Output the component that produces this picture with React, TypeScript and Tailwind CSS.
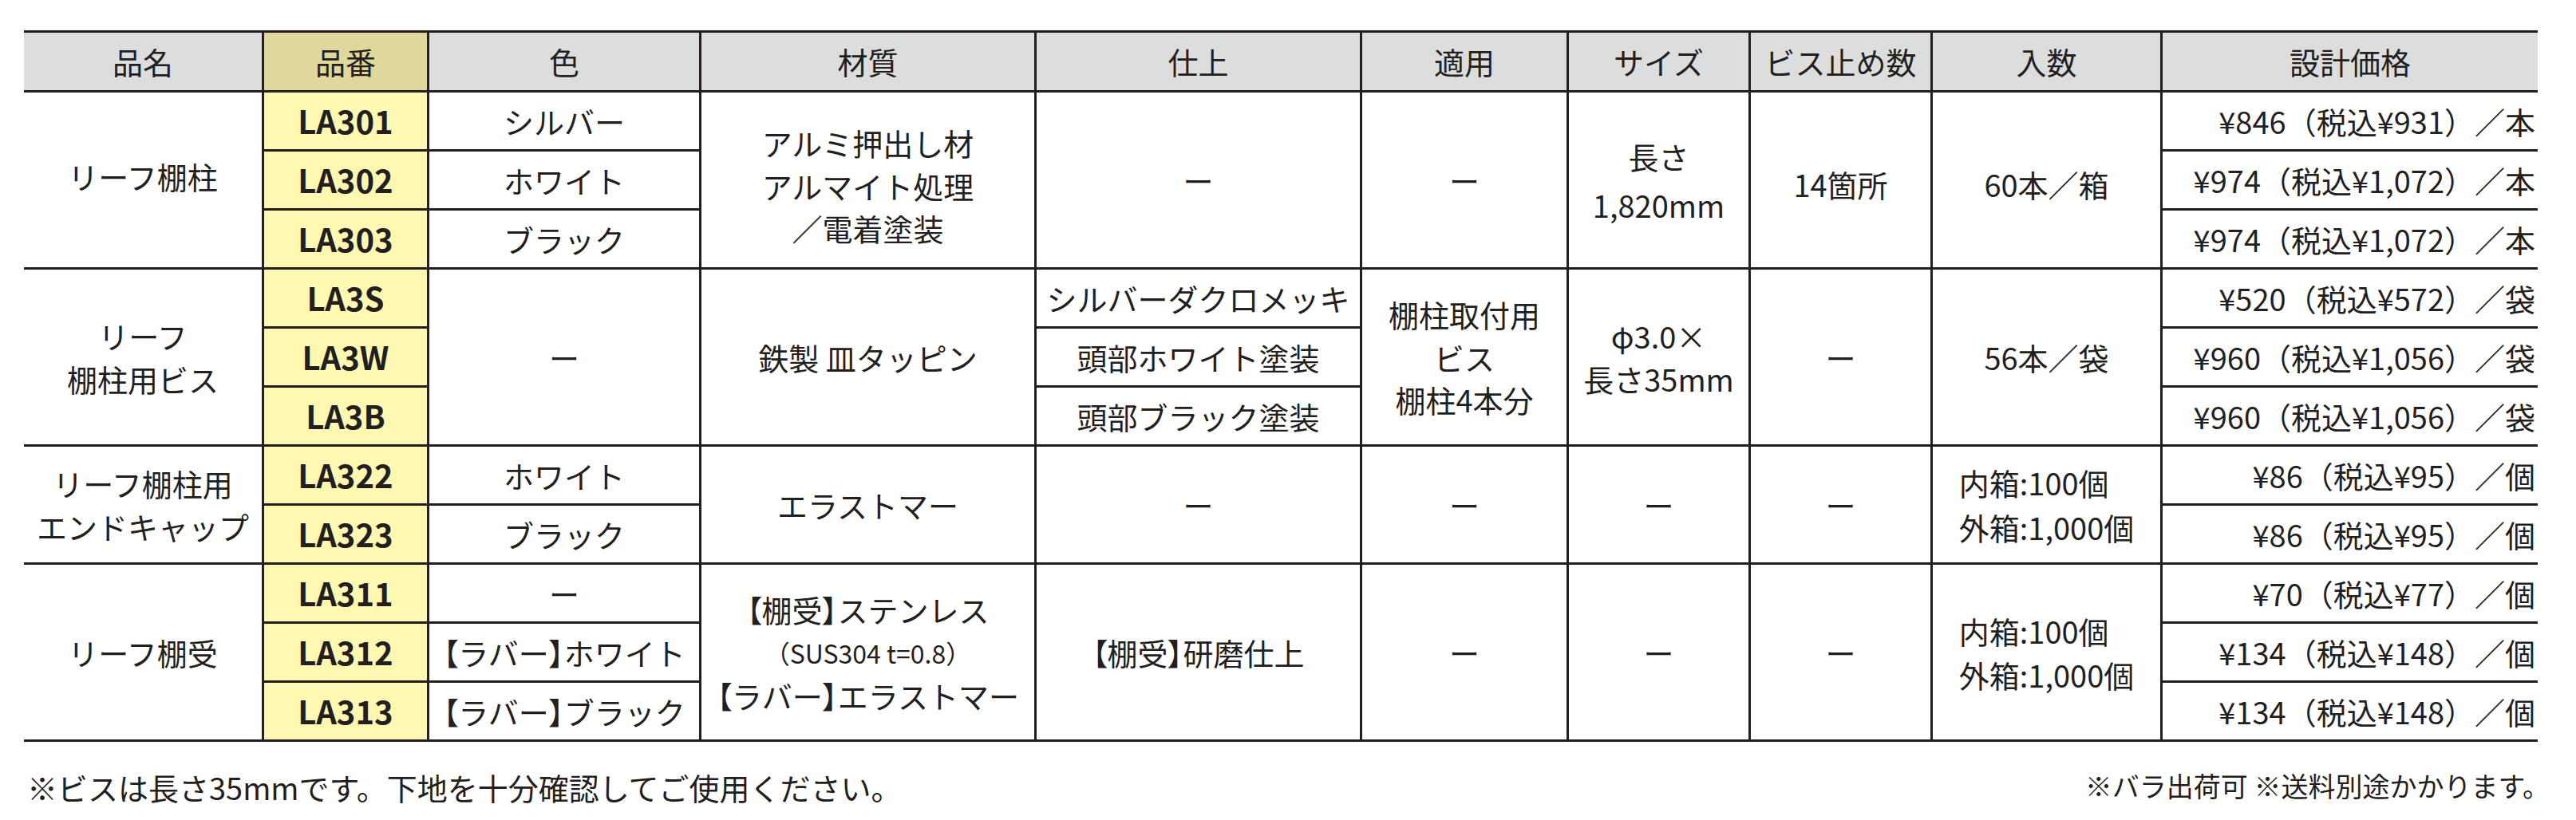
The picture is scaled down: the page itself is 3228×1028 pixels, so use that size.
import type { ReactNode } from 'react';

const FONT = "font-['Noto_Sans_CJK_JP','Noto_Sans_CJK_SC',sans-serif]";

type CellProps = {
  children?: ReactNode;
  className?: string;
  bg?: string;
};

function Cell({ children, className = '', bg = 'bg-white' }: CellProps) {
  return (
    <div className={`flex items-center justify-center text-center whitespace-nowrap ${bg} ${className}`}>
      {children}
    </div>
  );
}

function Head({ children, bg = 'bg-[#dcdddd]' }: CellProps) {
  return <Cell bg={bg}>{children}</Cell>;
}

function Code({ children }: CellProps) {
  return (
    <Cell bg="bg-[#fff8b1]" className="text-[40px] font-bold">
      {children}
    </Cell>
  );
}

function Price({ children }: CellProps) {
  return <Cell className="justify-end pr-[3px]">{children}</Cell>;
}

// 【 】 を半角幅で詰める
function Br({ children }: CellProps) {
  return <span className="[font-feature-settings:'palt']">{children}</span>;
}

const DASH = 'ー';

export default function App() {
  return (
    <div className={`min-h-[1028px] w-[3228px] bg-white pt-[38px] text-[#231f20] ${FONT}`}>
      <div className="ml-[30px] grid w-[3150px] grid-cols-[298px_204px_338px_417px_405px_256px_225px_225px_285px_470px] grid-rows-[72px_repeat(11,71px)] gap-[3px] border-y-[3px] border-[#231f20] bg-[#231f20] text-[38px] leading-[1.42]">
        {/* ヘッダー */}
        <Head>品名</Head>
        <Head bg="bg-[#e0d89b]">品番</Head>
        <Head>色</Head>
        <Head>材質</Head>
        <Head>仕上</Head>
        <Head>適用</Head>
        <Head>サイズ</Head>
        <Head>ビス止め数</Head>
        <Head>入数</Head>
        <Head>設計価格</Head>

        {/* リーフ棚柱 */}
        <Cell className="row-span-3 pb-[10px]">リーフ棚柱</Cell>
        <Code>LA301</Code>
        <Cell>シルバー</Cell>
        <Cell className="row-span-3 pt-[14px]">
          アルミ押出し材
          <br />
          アルマイト処理
          <br />
          ／電着塗装
        </Cell>
        <Cell className="row-span-3">{DASH}</Cell>
        <Cell className="row-span-3">{DASH}</Cell>
        <Cell className="row-span-3 leading-[61px]">
          長さ
          <br />
          1,820mm
        </Cell>
        <Cell className="row-span-3 pt-[10px]">14箇所</Cell>
        <Cell className="row-span-3 pt-[10px]">60本／箱</Cell>
        <Price>¥846（税込¥931）／本</Price>
        <Code>LA302</Code>
        <Cell>ホワイト</Cell>
        <Price>¥974（税込¥1,072）／本</Price>
        <Code>LA303</Code>
        <Cell>ブラック</Cell>
        <Price>¥974（税込¥1,072）／本</Price>

        {/* リーフ棚柱用ビス */}
        <Cell className="row-span-3">
          リーフ
          <br />
          棚柱用ビス
        </Cell>
        <Code>LA3S</Code>
        <Cell className="row-span-3">{DASH}</Cell>
        <Cell className="row-span-3">鉄製 皿タッピン</Cell>
        <Cell>シルバーダクロメッキ</Cell>
        <Cell className="row-span-3">
          棚柱取付用
          <br />
          ビス
          <br />
          棚柱4本分
        </Cell>
        <Cell className="row-span-3">
          φ3.0×
          <br />
          長さ35mm
        </Cell>
        <Cell className="row-span-3">{DASH}</Cell>
        <Cell className="row-span-3">56本／袋</Cell>
        <Price>¥520（税込¥572）／袋</Price>
        <Code>LA3W</Code>
        <Cell>頭部ホワイト塗装</Cell>
        <Price>¥960（税込¥1,056）／袋</Price>
        <Code>LA3B</Code>
        <Cell>頭部ブラック塗装</Cell>
        <Price>¥960（税込¥1,056）／袋</Price>

        {/* エンドキャップ */}
        <Cell className="row-span-2">
          リーフ棚柱用
          <br />
          エンドキャップ
        </Cell>
        <Code>LA322</Code>
        <Cell>ホワイト</Cell>
        <Cell className="row-span-2">エラストマー</Cell>
        <Cell className="row-span-2">{DASH}</Cell>
        <Cell className="row-span-2">{DASH}</Cell>
        <Cell className="row-span-2">{DASH}</Cell>
        <Cell className="row-span-2">{DASH}</Cell>
        <Cell className="row-span-2 leading-[56px]">
          <div className="text-left">
            内箱:100個
            <br />
            外箱:1,000個
          </div>
        </Cell>
        <Price>¥86（税込¥95）／個</Price>
        <Code>LA323</Code>
        <Cell>ブラック</Cell>
        <Price>¥86（税込¥95）／個</Price>

        {/* リーフ棚受 */}
        <Cell className="row-span-3">リーフ棚受</Cell>
        <Code>LA311</Code>
        <Cell>{DASH}</Cell>
        <Cell className="row-span-3">
          <div>
            <div>
              <Br>【</Br>棚受<Br>】</Br>ステンレス
            </div>
            <div className="text-[32px] leading-[54px]">（SUS304 t=0.8）</div>
            <div>
              <Br>【</Br>ラバー<Br>】</Br>エラストマー
            </div>
          </div>
        </Cell>
        <Cell className="row-span-3">
          <Br>【</Br>棚受<Br>】</Br>研磨仕上
        </Cell>
        <Cell className="row-span-3">{DASH}</Cell>
        <Cell className="row-span-3">{DASH}</Cell>
        <Cell className="row-span-3">{DASH}</Cell>
        <Cell className="row-span-3 leading-[55px]">
          <div className="text-left">
            内箱:100個
            <br />
            外箱:1,000個
          </div>
        </Cell>
        <Price>¥70（税込¥77）／個</Price>
        <Code>LA312</Code>
        <Cell>
          <Br>【</Br>ラバー<Br>】</Br>ホワイト
        </Cell>
        <Price>¥134（税込¥148）／個</Price>
        <Code>LA313</Code>
        <Cell>
          <Br>【</Br>ラバー<Br>】</Br>ブラック
        </Cell>
        <Price>¥134（税込¥148）／個</Price>
      </div>

      {/* 注記 */}
      <div className="ml-[30px] mt-[38px] flex w-[3150px] items-start justify-between">
        <span className="pl-[4px] text-[38px] leading-none">※ビスは長さ35mmです。下地を十分確認してご使用ください。</span>
        <span className="-mr-[15px] text-[34px] leading-none">※バラ出荷可 ※送料別途かかります。</span>
      </div>
    </div>
  );
}
